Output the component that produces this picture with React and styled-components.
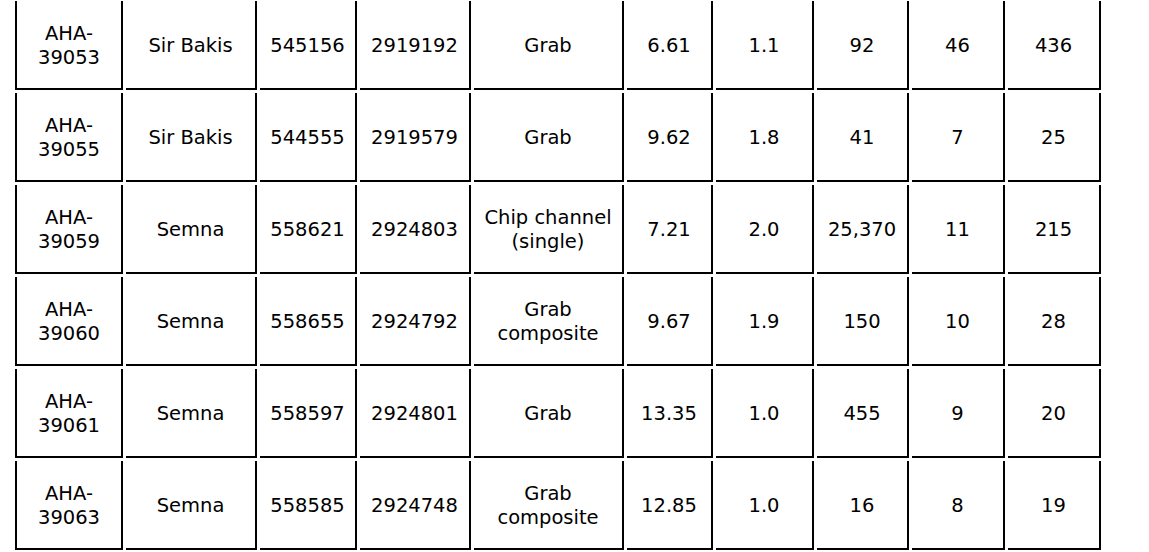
import React from "react";
import styled, { createGlobalStyle } from "styled-components";

const Global = createGlobalStyle`
  html, body { margin: 0; padding: 0; background: #ffffff; }
  body { font-family: "DejaVu Sans", Verdana, sans-serif; color: #000; }
`;

const Table = styled.table`
  border-collapse: separate;
  border-spacing: 3px;
  margin: -2px 0 0 12px;
  table-layout: fixed;
  font-family: "DejaVu Sans", Verdana, sans-serif;
  font-size: 19.5px;
  line-height: 24px;
`;

const Row = styled.tr``;

const Cell = styled.td`
  box-sizing: border-box;
  width: ${(p) => p.$w}px;
  height: 89px;
  padding: 2px 5px 0;
  text-align: center;
  vertical-align: middle;
  border-right: 2px solid #000;
  border-bottom: 2px solid #000;
  &:first-child {
    border-left: 2px solid #000;
  }
`;

const widths = [108, 131, 97, 111, 150, 86, 98, 92, 93, 93];

const rows = [
  ["AHA-39053", "Sir Bakis", "545156", "2919192", "Grab", "6.61", "1.1", "92", "46", "436"],
  ["AHA-39055", "Sir Bakis", "544555", "2919579", "Grab", "9.62", "1.8", "41", "7", "25"],
  ["AHA-39059", "Semna", "558621", "2924803", "Chip channel (single)", "7.21", "2.0", "25,370", "11", "215"],
  ["AHA-39060", "Semna", "558655", "2924792", "Grab composite", "9.67", "1.9", "150", "10", "28"],
  ["AHA-39061", "Semna", "558597", "2924801", "Grab", "13.35", "1.0", "455", "9", "20"],
  ["AHA-39063", "Semna", "558585", "2924748", "Grab composite", "12.85", "1.0", "16", "8", "19"],
];

export default function App() {
  return (
    <>
      <Global />
      <Table>
        <tbody>
          {rows.map((r, i) => (
            <Row key={i}>
              {r.map((c, j) => (
                <Cell key={j} $w={widths[j]}>
                  {c}
                </Cell>
              ))}
            </Row>
          ))}
        </tbody>
      </Table>
    </>
  );
}
